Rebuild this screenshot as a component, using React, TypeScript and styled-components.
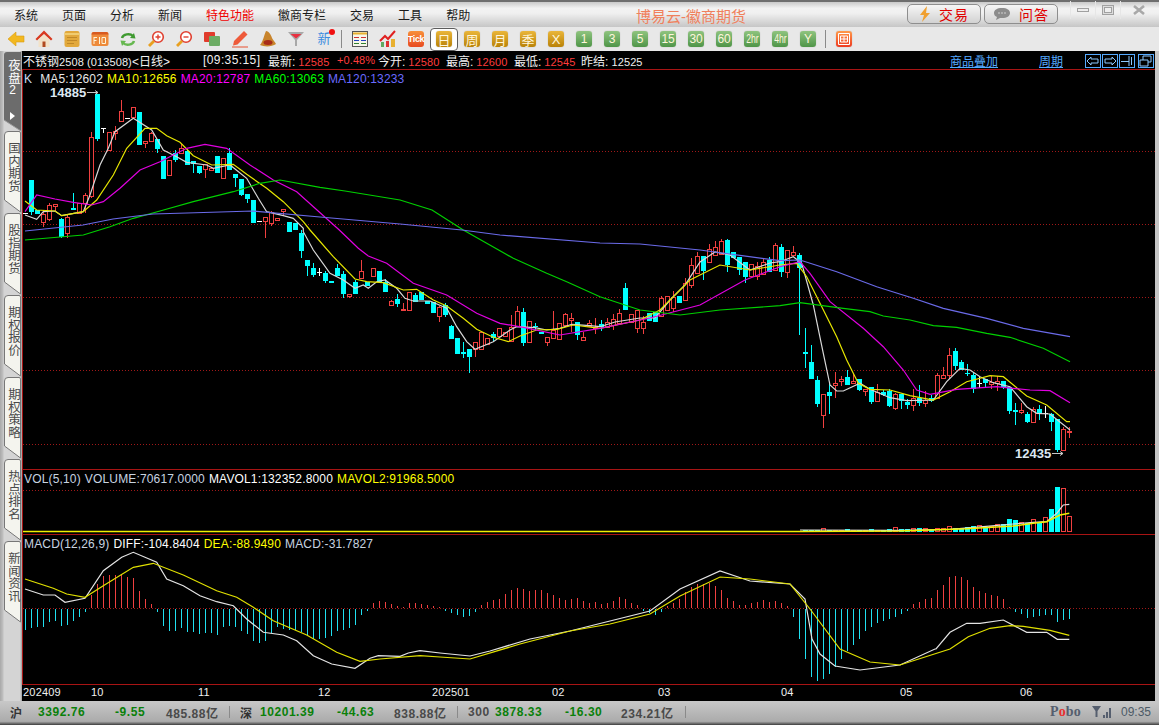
import React from "react";
import styled, { createGlobalStyle } from "styled-components";

// Chart data, read off the picture: y is [y / scale + offset] in page pixels

type Kind = "c" | "r" | "w";
type Row = [Kind, number, number, number, number];
type Candle = { k: Kind; t: number; b: number; wt: number; wb: number };

const c = (t: number, b: number, wt = t, wb = b): Row => ["c", t, b, wt, wb];
const r = (t: number, b: number, wt = t, wb = b): Row => ["r", t, b, wt, wb];
const w = (t: number, b: number, wt = t, wb = b): Row => ["w", t, b, wt, wb];

const seg = (oy: number, s: number, rows: Row[]): Candle[] =>
  rows.map(([k, t, b, wt, wb]) => ({
    k,
    t: oy + t / s,
    b: oy + b / s,
    wt: oy + wt / s,
    wb: oy + wb / s,
  }));

const candles: Candle[] = [
  ...seg(85, 3, [
    c(285, 380, 285, 390), c(375, 388), r(388, 412, 375, 425), r(360, 402, 355, 407), r(358, 365, 358, 380),
    c(402, 455, 400, 460), r(395, 443, 390, 460), c(370, 375, 323, 375), r(355, 385), r(330, 355, 325, 385),
    r(157, 335, 140, 340), c(27, 162, 27, 167), w(130, 132, 130, 145), r(142, 195, 142, 198), r(137, 143, 122, 165),
    r(78, 107, 45, 107), w(100, 102), r(67, 98), c(82, 182), r(167, 172, 167, 190),
    r(145, 170, 140, 170), c(162, 192, 162, 203), c(213, 281), r(226, 271), c(205, 225, 195, 232),
    r(190, 205, 178, 205), c(197, 240, 195, 240), c(227, 236, 227, 262), c(243, 263, 243, 268), r(238, 252, 238, 278),
    r(250, 256), c(213, 263), r(220, 281), c(204, 254, 190, 254), c(267, 278, 267, 305),
    c(283, 330, 283, 335), c(327, 342, 327, 355), c(345, 415), w(408, 410), r(397, 410, 397, 458),
    r(380, 412, 378, 422), r(398, 403), r(373, 378, 373, 392), c(411, 440), c(413, 435),
  ]),
  ...seg(230, 3, [
    c(10, 65, 0, 83), c(90, 108, 90, 137), c(113, 135, 98, 140), w(127, 129, 115, 138), c(128, 153, 122, 157),
    c(153, 158), c(113, 138, 102, 138), c(132, 192, 122, 203), r(193, 200, 193, 203), c(155, 192, 150, 192),
    r(124, 146, 90, 146), c(156, 167), r(114, 137), c(123, 155), c(155, 186, 148, 186),
    r(214, 227, 210, 227), c(207, 221, 193, 233), r(238, 242, 220, 242), r(187, 242), c(195, 215, 190, 215),
    c(187, 210), c(213, 222), c(215, 248), r(232, 258, 228, 275), c(224, 255, 220, 263),
    c(287, 327, 285, 327), c(323, 372), c(366, 372, 335, 383), c(357, 381, 357, 428), r(337, 358, 337, 380),
    r(305, 355), r(325, 342), c(312, 325, 305, 333), r(295, 320), r(305, 318),
    r(292, 335, 255, 335), r(243, 288, 228, 288), c(246, 340, 235, 350), r(274, 338), c(289, 291, 278, 300),
    c(305, 311), r(322, 338, 322, 347), r(300, 323, 243, 323), r(280, 329), r(253, 285, 250, 285),
    r(265, 270, 250, 305), c(277, 315, 277, 332), r(322, 331, 305, 331), r(280, 290, 270, 290), r(292, 295, 265, 312),
  ]),
  ...seg(0, 1, [
    c(324, 327, 320, 331), r(322, 327, 318, 327), r(319, 325, 314, 330), r(313, 323, 309, 323), c(288, 310, 283, 310),
    r(314, 322), r(310, 328, 310, 333), r(322, 328, 316, 334), c(313, 321), c(312, 322),
    r(298, 316, 296, 316), r(296, 310), r(297, 308, 291, 312), c(296, 303), r(283, 300, 278, 300),
    r(265, 285, 258, 288), r(256, 273, 252, 273), c(256, 271, 256, 280), r(249, 262, 244, 262), r(247, 255, 241, 255),
    r(241, 254, 239, 254), c(240, 265, 239, 272), c(252, 258), c(257, 270, 257, 275), c(262, 277, 262, 283),
    r(264, 276), r(266, 276, 262, 280), r(262, 274, 258, 274), c(260, 272, 257, 272), r(245, 270, 243, 270),
  ]),
  ...seg(230, 3, [
    c(50, 125, 42, 140), r(60, 125, 60, 143), r(66, 76, 48, 76), c(75, 113, 70, 315), c(366, 372, 293, 413),
    c(395, 447, 345, 447), c(450, 522, 438, 530), r(492, 554, 492, 593), c(486, 498, 460, 552), r(460, 467, 425, 503),
    r(448, 455, 437, 467), c(441, 465, 420, 465), r(453, 460, 428, 460), c(448, 480, 448, 483), r(477, 483, 477, 498),
    c(470, 516, 470, 520), r(485, 513, 463, 513), c(487, 497, 480, 497), c(482, 528, 478, 533), r(492, 533, 488, 540),
    c(492, 512, 492, 537), c(515, 525, 508, 537), r(505, 525, 478, 543), c(505, 520, 465, 528), r(510, 520, 483, 530),
    c(505, 515, 495, 515), r(435, 503, 428, 503), r(435, 443, 412, 447), r(375, 435, 355, 447), c(363, 408, 355, 420),
    c(396, 420, 390, 420), c(429, 431, 403, 440), c(435, 478, 425, 488), w(459, 461, 440, 473), c(447, 460, 447, 473),
    r(455, 461, 437, 478), r(453, 460, 437, 483), c(453, 470, 453, 478), c(470, 543, 470, 550), c(540, 545, 518, 585),
    r(541, 546, 520, 552), c(552, 577, 545, 577), r(538, 576, 530, 576), c(537, 553, 525, 570), w(549, 551, 528, 563),
    c(552, 575, 548, 603), c(567, 660, 567, 665), r(598, 662, 590, 662), r(603, 607, 590, 623),
  ]),
];

const candleX = (i: number) => 31 + i * 6;

const pts = (ox: number, oy: number, s: number, a: number[]) => {
  const out: string[] = [];
  for (let i = 0; i < a.length; i += 2) out.push(`${(ox + a[i] / s).toFixed(1)},${(oy + a[i + 1] / s).toFixed(1)}`);
  return out.join(" ");
};

const maLines = [
  {
    color: "#d8d8d8",
    points: [
      pts(20, 85, 3, [15, 390, 50, 403, 70, 380, 105, 378, 125, 392, 190, 380, 210, 330, 240, 240, 265, 190, 285, 140, 340, 100, 395, 135, 430, 195, 470, 215, 500, 232, 560, 240, 580, 250, 630, 240, 680, 280, 715, 340, 740, 380, 790, 392, 820, 400, 850, 430]),
      pts(300, 230, 3, [10, 5, 40, 60, 90, 130, 130, 150, 165, 175, 190, 165, 205, 175, 230, 155, 255, 150, 290, 175, 315, 205, 340, 213, 390, 213, 440, 235, 470, 290, 500, 335, 525, 358, 580, 335, 630, 300, 650, 290, 705, 293, 740, 300, 780, 295, 815, 283, 870, 287, 900, 290]),
      pts(0, 0, 1, [615, 322, 640, 318, 655, 318, 670, 300, 685, 285, 700, 262, 715, 252, 730, 255, 750, 270, 770, 263]),
      pts(780, 230, 3, [0, 95, 40, 80, 65, 100, 100, 225, 130, 370, 150, 465, 170, 483, 190, 483, 240, 460, 270, 478, 330, 503, 380, 512, 460, 510, 500, 455, 540, 415, 570, 420, 600, 440, 640, 458, 690, 470, 740, 530, 770, 550, 810, 552, 870, 600]),
    ],
  },
  {
    color: "#e6e600",
    points: [
      pts(20, 85, 3, [15, 348, 50, 375, 105, 378, 125, 392, 190, 380, 230, 345, 280, 270, 320, 190, 375, 130, 410, 130, 440, 152, 480, 172, 520, 212, 575, 240, 640, 238, 680, 268, 740, 310, 790, 350, 850, 410]),
      pts(300, 230, 3, [30, 0, 100, 80, 165, 147, 200, 155, 250, 158, 310, 180, 350, 178, 400, 210, 440, 228, 490, 265, 530, 298, 580, 322, 625, 335, 660, 318, 710, 300, 770, 298, 820, 285, 900, 295]),
      pts(0, 0, 1, [640, 320, 660, 310, 690, 280, 720, 265, 750, 270]),
      pts(780, 230, 3, [0, 105, 50, 100, 80, 140, 120, 220, 170, 320, 200, 390, 235, 460, 270, 478, 330, 480, 390, 497, 460, 510, 510, 485, 560, 455, 630, 437, 670, 440, 740, 498, 800, 525, 860, 575, 870, 575]),
    ],
  },
  {
    color: "#e000e0",
    points: [
      pts(20, 85, 3, [15, 380, 50, 330, 105, 342, 160, 352, 215, 360, 250, 350, 300, 310, 360, 255, 420, 230, 500, 190, 555, 178, 620, 190, 690, 240, 760, 285, 830, 320]),
      pts(300, 230, 3, [118, 0, 175, 55, 205, 78, 260, 100, 340, 160, 440, 195, 530, 250, 600, 280, 670, 292, 780, 315, 900, 295]),
      pts(0, 0, 1, [650, 318, 700, 305, 745, 280]),
      pts(780, 230, 3, [0, 110, 60, 95, 90, 130, 150, 215, 250, 295, 310, 350, 370, 420, 410, 480, 450, 493, 530, 478, 650, 470, 750, 480, 810, 482, 870, 518]),
    ],
  },
  {
    color: "#00d000",
    points: [
      pts(20, 85, 3, [15, 465, 190, 450, 270, 425, 340, 400, 420, 378, 520, 350, 640, 320, 720, 295, 780, 285, 900, 307]),
      pts(0, 0, 1, [345, 191, 400, 200, 432, 210]),
      pts(300, 230, 3, [490, 0, 560, 40, 640, 85, 740, 130, 800, 155, 900, 200]),
      pts(0, 0, 1, [640, 310, 680, 315, 720, 310]),
      pts(780, 230, 3, [0, 227, 60, 218, 190, 235, 270, 245, 310, 258, 390, 270, 460, 287, 530, 292, 620, 310, 690, 322, 790, 355, 870, 395]),
    ],
  },
  {
    color: "#6a6ae8",
    points: [
      pts(0, 0, 1, [25, 231, 83, 225, 113, 219, 153, 214, 187, 213, 220, 212, 253, 211, 320, 217, 400, 224, 462, 230, 500, 235, 600, 243, 640, 244, 700, 250]),
      pts(780, 230, 3, [0, 92, 60, 90, 170, 125, 290, 170, 400, 205, 490, 235, 620, 265, 730, 295, 870, 320]),
    ],
  },
];

const volTail = [3, 5, 4, 4, 5, 6, 6, 5, 5, 7, 8, 13, 12, 9, 9, 12, 10, 14, 23, 45, 43, 15];
const volHeight = (i: number) => {
  if (i >= 152) return volTail[i - 152];
  if (i > 128) return 2 + (i % 4 === 0 ? 1 : 0) + (i > 142 ? 1 : 0);
  return 1;
};

const volWhite = [
  pts(0, 0, 1, [800, 530]),
  pts(900, 470, 3, [0, 181, 150, 178, 250, 170, 340, 162, 400, 157, 440, 155, 470, 130, 490, 105, 508, 103]),
];
const volYellow = [
  pts(0, 0, 1, [23, 531.5, 500, 531.5, 800, 531.5]),
  pts(900, 470, 3, [0, 183, 200, 176, 340, 168, 400, 160, 440, 155, 480, 135, 508, 130]),
];

const histHead = [300, 295, 293, 292, 278, 273, 290, 285, 275, 263, 248, 200, 165, 143, 140, 140, 135, 145, 147, 187, 212, 227, 248, 288, 303, 305, 296, 306, 308, 312, 310, 310, 317, 292, 288, 292, 303, 312, 334, 339, 335, 310, 292, 297, 300, 302, 307, 320, 328, 327, 325, 318, 303, 301, 295, 286, 255, 243, 222, 216, 219, 225, 232, 237, 222, 222].map((z) => (238 - z) / 3);
const histMid = [4, 3, 2, 1, -2, -4, -6, -8, -7, -3, 3, 6, 8, 9, 14, 18, 20, 19, 17, 18, 18, 15, 13, 10, 8, 9, 10, 7, 5, 6, 4, 5, 7, 11, 9, 5, 3, -2, -4, -6, -3, 2, 5, 9, 16, 21, 24, 24, 25, 22, 18, 10, 7, 3, 3, 5, 6, 8, 6, 7, 5, 2, -8, -30, -50, -68, -72, -70, -65, -58, -50, -42, -36, -30, -22, -18, -14, -12, -10, -8, -5, -2];
const histTail = [405, 399, 390, 387, 363, 348, 324, 321, 324, 333, 354, 366, 372, 378, 381, 390, 414, 426, 432, 444, 441, 438, 435, 435, 456, 450, 447].map((z) => (418 - z) / 3);
const hist = [...histHead, ...histMid, ...histTail];

const diffLine = [
  pts(20, 530, 3, [15, 180, 70, 198, 105, 198, 135, 220, 195, 208, 250, 125, 305, 85, 340, 70, 410, 100, 440, 150, 490, 170, 540, 200, 590, 218, 640, 230, 680, 270, 730, 310, 790, 318, 830, 335, 880, 380, 935, 405, 1005, 418, 1050, 388, 1075, 380, 1140, 382, 1165, 372, 1200, 365]),
  pts(0, 0, 1, [440, 654, 470, 657, 490, 652, 530, 640, 570, 632, 610, 622, 650, 612, 680, 590, 720, 572, 750, 582, 790, 585, 805, 600, 812, 640, 820, 655, 835, 667, 860, 671, 900, 666, 935, 650]),
  pts(900, 470, 3, [108, 540, 150, 490, 200, 463, 240, 463, 310, 453, 380, 490, 440, 490, 472, 511, 508, 511]),
];
const deaLine = [
  pts(20, 530, 3, [15, 150, 100, 178, 140, 195, 195, 205, 250, 170, 340, 115, 400, 103, 490, 138, 590, 185, 650, 205, 700, 235, 760, 275, 860, 318, 950, 370, 1020, 397, 1080, 390, 1200, 380]),
  pts(0, 0, 1, [440, 658, 470, 660, 520, 645, 570, 632, 610, 625, 650, 615, 680, 597, 720, 578, 750, 580, 790, 585, 810, 610, 840, 650, 870, 663, 900, 666, 950, 650]),
  pts(900, 470, 3, [150, 540, 205, 503, 270, 478, 330, 470, 370, 472, 450, 484, 508, 499]),
];

const axisMarks = [
  { label: "202409", x: 23 },
  { label: "10", x: 91 },
  { label: "11", x: 198 },
  { label: "12", x: 318 },
  { label: "202501", x: 432 },
  { label: "02", x: 552 },
  { label: "03", x: 658 },
  { label: "04", x: 781 },
  { label: "05", x: 900 },
  { label: "06", x: 1020 },
];

const menuItems = ["系统", "页面", "分析", "新闻", "特色功能", "徽商专栏", "交易", "工具", "帮助"];
const sideTabs = ["国内期货", "股指期货", "期权报价", "期权策略", "热点排名", "新闻资讯"];
const goldCycles = ["周", "月", "季", "X"];
const greenCycles = ["1", "3", "5", "15", "30", "60", "2hr", "4hr", "Y"];

// Styled Components

const Global = createGlobalStyle`
  html, body { margin: 0; padding: 0; background: #c8c8c8; }
  * { box-sizing: border-box; }
`;

const Shell = styled.div`
  width: 1159px;
  height: 725px;
  overflow: hidden;
  display: flex;
  flex-direction: column;
  font-family: "Liberation Sans", "Noto Sans CJK SC", sans-serif;
  font-size: 12px;
  background: #c4c4c4;
`;

const MenuBar = styled.div`
  height: 27px;
  flex: none;
  display: flex;
  align-items: center;
  padding-left: 14px;
  border-top: 2px solid #6e6e6e;
  background: linear-gradient(#c9c9c9 0%, #f2f2f2 25%, #f0f0f0 45%, #c6c6c6 100%);
  position: relative;
`;

const MenuItem = styled.span<{ $hot?: boolean }>`
  margin-right: 24px;
  color: ${(p) => (p.$hot ? "#f00000" : "#1a1a1a")};
  font-size: 12px;
  white-space: nowrap;
`;

const BrandTitle = styled.span`
  position: absolute;
  left: 636px;
  top: 3px;
  color: #f0805c;
  font-size: 15px;
`;

const MenuActions = styled.div`
  position: absolute;
  left: 907px;
  top: 2px;
  display: flex;
  gap: 3px;
`;

const ActionButton = styled.div`
  width: 74px;
  height: 20px;
  display: flex;
  align-items: center;
  justify-content: center;
  gap: 8px;
  border: 1px solid #8e8e8e;
  border-radius: 5px;
  background: linear-gradient(#f6f6f6, #d2d2d2);
  color: #e00000;
  font-size: 14px;
  letter-spacing: 1px;
`;

const WindowButtons = styled.div`
  position: absolute;
  left: 1070px;
  top: -1px;
  display: flex;
`;

const WindowButton = styled.div<{ $w: number }>`
  width: ${(p) => p.$w}px;
  height: 18px;
  display: flex;
  align-items: center;
  justify-content: center;
  border-left: 1px solid #e6e6e6;
`;

const ToolBar = styled.div`
  height: 24px;
  flex: none;
  display: flex;
  align-items: center;
  padding-left: 2px;
  background: #e8e8e8;
`;

const ToolSlot = styled.div`
  width: 28px;
  height: 24px;
  flex: none;
  display: flex;
  align-items: center;
  justify-content: center;
`;

const ToolDivider = styled.div`
  width: 8px;
  height: 18px;
  flex: none;
  margin-bottom: 1px;
  background: linear-gradient(#8a8a8a, #8a8a8a) 3px 0 / 1px 100% no-repeat;
`;

const ActiveSlot = styled(ToolSlot)`
  height: 23px;
  border: 1px solid #5c5c5c;
  border-radius: 4px;
  background: #ffffff;
`;

const CycleKey = styled.div<{ $tone: "gold" | "green" | "red" }>`
  width: 16px;
  height: 16px;
  display: flex;
  align-items: center;
  justify-content: center;
  border-radius: 3px;
  color: #fff6dc;
  font-family: "Liberation Sans", "Noto Sans CJK SC", sans-serif;
  font-size: ${(p) => (p.$tone === "gold" ? 13 : 12)}px;
  white-space: nowrap;
  letter-spacing: -0.2px;
  background: ${(p) =>
    p.$tone === "gold"
      ? "linear-gradient(#eab63a, #b98208)"
      : p.$tone === "green"
      ? "linear-gradient(#8fc47f, #4f9548)"
      : "linear-gradient(#ff9a4a, #ee3a20)"};
  box-shadow: 0 0 1px #9a9a9a;
`;

const TightLabel = styled.span`
  display: inline-block;
  transform: scaleX(0.72);
`;

const NewMark = styled.span`
  position: relative;
  color: #3c8ce0;
  font-size: 13px;
  line-height: 14px;
  &::after {
    content: "";
    position: absolute;
    right: -4px;
    top: -3px;
    width: 6px;
    height: 6px;
    border-radius: 50%;
    background: #f01010;
  }
`;

const TickKey = styled.div`
  width: 16px;
  height: 16px;
  display: flex;
  align-items: center;
  justify-content: center;
  border-radius: 3px;
  background: linear-gradient(#f8903a, #e84a20);
  color: #fff;
  font-size: 9px;
  font-weight: bold;
  letter-spacing: -0.3px;
`;

const Body = styled.div`
  flex: 1;
  min-height: 0;
  display: flex;
`;

const Rail = styled.div`
  width: 22px;
  flex: none;
  padding-left: 4px;
  background: linear-gradient(90deg, #a8a8a8 0, #c0c0c0 3px, #d4d4d4 4px, #d4d4d4 20px, #9c9c9c 22px);
  display: flex;
  flex-direction: column;
`;

const RailTab = styled.div<{ $active?: boolean }>`
  position: relative;
  width: 17px;
  height: ${(p) => (p.$active ? 80 : 82)}px;
  flex: none;
  display: flex;
  flex-direction: column;
  align-items: center;
  padding-top: ${(p) => (p.$active ? 8 : 11)}px;
  color: ${(p) => (p.$active ? "#ffffff" : "#4a4a4a")};
`;

const TabShape = styled.svg`
  position: absolute;
  left: 0;
  top: 0;
`;

const TabLabel = styled.span`
  position: relative;
  writing-mode: vertical-rl;
  font-size: 12.5px;
  line-height: 15px;
`;

const TabIndex = styled.span`
  position: relative;
  font-size: 12px;
  line-height: 13px;
`;

const TabArrow = styled.span`
  position: relative;
  margin-top: 15px;
  width: 0;
  height: 0;
  border-left: 5px solid #fff;
  border-top: 4px solid transparent;
  border-bottom: 4px solid transparent;
`;

const ChartColumn = styled.div`
  flex: 1;
  min-width: 0;
  display: flex;
  flex-direction: column;
  margin-right: 4px;
  background: #000;
  color: #fff;
`;

const InfoBar = styled.div`
  height: 19px;
  flex: none;
  position: relative;
  display: flex;
  align-items: center;
  padding-left: 1px;
  border-bottom: 1px solid #a81414;
  white-space: nowrap;
`;

const InfoField = styled.span<{ $w: number }>`
  width: ${(p) => p.$w}px;
  flex: none;
  color: #f0f0f0;
`;

const Num = styled.span`
  font-size: 11px;
  letter-spacing: 0.1px;
`;

const Clock = styled(Num)`
  font-size: 12px;
  letter-spacing: 0.4px;
`;

const Up = styled(Num)`
  color: #ff3c3c;
  margin-left: 3px;
`;

const InfoLinks = styled.div`
  position: absolute;
  left: 928px;
  top: 1px;
  display: flex;
  align-items: center;
  height: 17px;
`;

const InfoLink = styled.a<{ $w: number }>`
  width: ${(p) => p.$w}px;
  color: #55aaff;
  text-decoration: underline;
`;

const NavKey = styled.div`
  width: 16px;
  height: 14px;
  margin-left: 1px;
  border: 1px solid #55aaff;
  display: flex;
  align-items: center;
  justify-content: center;
  &:last-child {
    margin-left: 3px;
  }
`;

const Pane = styled.div<{ $h: number }>`
  position: relative;
  height: ${(p) => p.$h}px;
  flex: none;
  border-left: 1px solid #a81414;
  border-bottom: 1px solid #a81414;
`;

const PaneSvg = styled.svg`
  display: block;
`;

const PaneHeader = styled.div`
  position: absolute;
  left: 1px;
  top: 2px;
  display: flex;
  gap: 4px;
  white-space: nowrap;
  line-height: 15px;
  letter-spacing: 0.16px;
`;

const Legend = styled.span<{ $color: string }>`
  color: ${(p) => p.$color};
`;

const LegendFirst = styled(Legend)`
  margin-right: 4px;
`;

const TimeAxis = styled.div`
  position: relative;
  height: 15px;
  flex: none;
`;

const AxisLabel = styled.span`
  position: absolute;
  top: 0;
  color: #f0f0f0;
  font-size: 11px;
  letter-spacing: 0.2px;
  line-height: 14px;
`;

const StatusBar = styled.div`
  height: 24px;
  flex: none;
  position: relative;
  display: flex;
  align-items: center;
  padding: 0 0 2px 10px;
  background: linear-gradient(#c8c8c8, #ababab 85%, #7a7a7a 92%, #3c3c3c 100%);
  font-weight: bold;
  white-space: nowrap;
`;

const StatusCell = styled.span<{ $w: number; $tone?: "green" | "grey" | "dark" }>`
  width: ${(p) => p.$w}px;
  flex: none;
  letter-spacing: 0.55px;
  color: ${(p) => (p.$tone === "green" ? "#0a800a" : p.$tone === "dark" ? "#333" : "#4a4a4a")};
`;

const StatusDivider = styled.span`
  width: 1px;
  height: 12px;
  flex: none;
  margin-right: 10px;
  background: #8a8a8a;
`;

const StatusRight = styled.div`
  position: absolute;
  left: 1050px;
  top: 0;
  height: 22px;
  display: flex;
  align-items: center;
`;

const PoboMark = styled.span`
  width: 42px;
  font-family: "Liberation Serif", serif;
  font-size: 14px;
  font-weight: bold;
  color: #555e6e;
  letter-spacing: 0.1px;
  & > b {
    color: #e83030;
  }
`;

const ClockText = styled.span`
  margin-left: 9px;
  font-weight: normal;
  color: #4c5a66;
`;

// Toolbar drawings

const Ic = ({ children }: { children: React.ReactNode }) => (
  <svg width="18" height="18" viewBox="0 0 18 18">
    {children}
  </svg>
);

const toolIcons: React.ReactNode[] = [
  <Ic key="back">
    <path d="M1 9l8-7v4h8v6H9v4z" fill="#f2b820" stroke="#d89a10" strokeWidth="0.6" />
  </Ic>,
  <Ic key="home">
    <path d="M9 0.500L0.500 9l1.500 1.500L9 4l7 6.500L17.500 9z" fill="#d83a20" />
    <path d="M3.500 9.500L9 4.500l5.500 5V17h-11z" fill="#f2e2c8" />
    <path d="M7.500 11.500h3V17h-3z" fill="#b04a20" />
  </Ic>,
  <Ic key="note">
    <rect x="1.500" y="1" width="15" height="16" rx="2" fill="#e2a93c" />
    <path d="M1.500 4h15" stroke="#f0cc70" strokeWidth="2" />
    <path d="M4 7.500h10M4 10.500h10M4 13.500h7" stroke="#c08828" />
  </Ic>,
  <Ic key="f10">
    <rect x="0.500" y="2" width="17" height="14" rx="2" fill="#ee8a3a" />
    <path d="M0.500 4.500q0-2.500 2-2.500h13q2 0 2 2.500z" fill="#d85a20" />
    <path d="M3 7v7M3 7.500h3M3 10.500h2.500M8.500 7v7M11 7.500h3.500v6H11z" stroke="#fff4d8" fill="none" />
  </Ic>,
  <Ic key="swap">
    <path d="M3 8c1-4 8-5 11-2" fill="none" stroke="#3f9a30" strokeWidth="2.400" />
    <path d="M16.500 8.500L11 8l4-5z" fill="#3f9a30" />
    <path d="M15 11c-1 4-8 5-11 2" fill="none" stroke="#66b850" strokeWidth="2.400" />
    <path d="M1.500 10.500L7 11l-4 5z" fill="#66b850" />
  </Ic>,
  <Ic key="in">
    <circle cx="11" cy="7" r="5.300" fill="#fff" stroke="#e04030" strokeWidth="1.600" />
    <path d="M8.500 7h5M11 4.500v5" stroke="#e04030" strokeWidth="1.400" />
    <path d="M7 11l-5 5" stroke="#e8a020" strokeWidth="2.800" />
  </Ic>,
  <Ic key="out">
    <circle cx="11" cy="7" r="5.300" fill="#fff" stroke="#e04030" strokeWidth="1.600" />
    <path d="M8.500 7h5" stroke="#e04030" strokeWidth="1.400" />
    <path d="M7 11l-5 5" stroke="#e8a020" strokeWidth="2.800" />
  </Ic>,
  <Ic key="layers">
    <rect x="1" y="2" width="11" height="10" rx="1" fill="#e03c2c" />
    <rect x="6" y="6" width="11" height="10" rx="1" fill="#6cac64" />
  </Ic>,
  <Ic key="pen">
    <path d="M3 11L13 1l3.500 3.500L6.500 14.500l-4.500 1z" fill="#ee5a3a" />
    <path d="M1 17h16" stroke="#e85030" />
  </Ic>,
  <Ic key="bell">
    <path d="M7 1c3 0 5 4 6 7 1 2 3 4 4 6-4 3-12 3-16 1 3-3 4-10 6-14z" fill="#c8842c" />
    <ellipse cx="9" cy="12.500" rx="4.500" ry="2.500" fill="#a82c18" />
  </Ic>,
  <Ic key="filter">
    <path d="M1 2h16L10 10v6H8v-6z" fill="#a8a8a8" />
    <path d="M3.500 4h11L9 8.500z" fill="#e83040" />
  </Ic>,
  <NewMark key="new">新</NewMark>,
];

const dataIcons: React.ReactNode[] = [
  <Ic key="table">
    <rect x="1.500" y="1.500" width="15" height="15" fill="#f6f6ea" stroke="#555" />
    <path d="M2 3.500h14" stroke="#e8b030" strokeWidth="2" />
    <path d="M3 7.500h5M10 7.500h5" stroke="#d03030" />
    <path d="M3 10.500h5M10 10.500h5" stroke="#2040c0" />
    <path d="M3 13.500h5M10 13.500h5" stroke="#308030" />
  </Ic>,
  <Ic key="trend">
    <path d="M1 11l5-5 3 3 7-8" fill="none" stroke="#e02020" strokeWidth="2" />
    <path d="M2 12h3v5H2z" fill="#60a860" />
    <path d="M7 11h3v6H7z" fill="#e03030" />
    <path d="M12 9h4v8h-4z" fill="#e8b030" />
  </Ic>,
  <TickKey key="tick">Tick</TickKey>,
];

const FrameIcon = () => (
  <svg width="12" height="12" viewBox="0 0 12 12">
    <path d="M.5.500h11v11h-11zM2.500 3h7v6h-7zM2.500 6h7M6 3v6" fill="none" stroke="#fff" />
  </svg>
);

const navPaths = [
  "M1 6l4-4v2h7v4H5v2z",
  "M13 6L9 2v2H2v4h7v2z",
  "M1 6.500h8M9 1v10M11.500 2v8",
  "M1 5h8v6H1zM4 5V1h8v6H9",
];

const tabPath = (h: number) =>
  `M.5 ${h - 13} V4 Q.5 .5 4 .5 H15 Q16.500 .5 16.500 2 V${h - 1} Z`;

const MainTab = () => (
  <TabShape width="17" height="80" viewBox="0 0 17 80">
    <path d="M0 4Q0 1 3 1H17V80L0 69Z" fill="#6c6c6c" />
    <path d="M0 69L17 80" stroke="#9a9a9a" />
  </TabShape>
);

// Functional Components

const CandleGlyph = ({ d, i }: { d: Candle; i: number }) => {
  const x = candleX(i);
  if (d.k === "r") {
    return (
      <g stroke="#f04040" fill="#000">
        {d.wt < d.t && <path d={`M${x + 0.5} ${Math.round(d.wt)}V${Math.round(d.t)}`} />}
        {d.wb > d.b && <path d={`M${x + 0.5} ${Math.round(d.b)}V${Math.round(d.wb)}`} />}
        <rect x={x - 1.5} y={Math.round(d.t) + 0.5} width={4} height={Math.max(1, Math.round(d.b - d.t))} />
      </g>
    );
  }
  const color = d.k === "w" ? "#ffffff" : "#00ffff";
  return (
    <g fill={color}>
      <rect x={x} y={Math.round(d.wt)} width={1} height={Math.max(1, Math.round(d.wb - d.wt))} />
      <rect x={x - 2} y={Math.round(d.t)} width={5} height={Math.max(1, Math.round(d.b - d.t))} />
    </g>
  );
};

const GridLine = ({ y }: { y: number }) => (
  <line x1={23} x2={1155} y1={y + 0.5} y2={y + 0.5} stroke="#a01818" strokeDasharray="1 2" shapeRendering="crispEdges" />
);

const Line = ({ points, color, weight = 1.2 }: { points: string; color: string; weight?: number }) => (
  <polyline points={points} fill="none" stroke={color} strokeWidth={weight} />
);

const PriceTag = ({ x, y, text }: { x: number; y: number; text: string }) => (
  <g>
    <text x={x} y={y} fill="#dce8f2" fontSize="13" fontWeight="bold" fontFamily="Liberation Sans, sans-serif">
      {text}
    </text>
    <path d={`M${x + 37} ${y - 4.5}h11m-3 -2l3 2l-3 2`} fill="none" stroke="#c8c8c8" />
  </g>
);

const MainPane = () => (
  <Pane $h={400}>
    <PaneSvg width={1132} height={399} viewBox="23 70 1132 399">
      {[151, 224, 297, 370, 444].map((y) => (
        <GridLine key={y} y={y} />
      ))}
      <g shapeRendering="crispEdges">
        <path d="M23 213.500h5" stroke="#fff" />
        {candles.map((d, i) => (
          <CandleGlyph key={i} d={d} i={i} />
        ))}
      </g>
      {maLines.map((m) => (
        <Line key={m.color} color={m.color} points={m.points.join(" ")} />
      ))}
      <PriceTag x={50} y={97} text="14885" />
      <PriceTag x={1015} y={458} text="12435" />
    </PaneSvg>
    <PaneHeader>
      <LegendFirst $color="#c8dcf0">K</LegendFirst>
      <Legend $color="#e8e8e8">MA5:12602</Legend>
      <Legend $color="#ffff00">MA10:12656</Legend>
      <Legend $color="#ff00ff">MA20:12787</Legend>
      <Legend $color="#00ff00">MA60:13063</Legend>
      <Legend $color="#6a6aff">MA120:13233</Legend>
    </PaneHeader>
  </Pane>
);

const VolumePane = () => (
  <Pane $h={65}>
    <PaneSvg width={1132} height={64} viewBox="23 470 1132 64">
      <GridLine y={490} />
      <g shapeRendering="crispEdges">
        {candles.map((d, i) => {
          const h = volHeight(i);
          const x = candleX(i);
          const up = d.k !== "c";
          if (up && h > 2) {
            return <rect key={i} x={x - 1.5} y={531.5 - h} width={4} height={h} fill="#000" stroke="#f04040" />;
          }
          return <rect key={i} x={x - 2} y={532 - h} width={5} height={h} fill={up ? "#f04040" : "#00ffff"} />;
        })}
      </g>
      <Line color="#e0e0e0" points={volWhite.join(" ")} />
      <Line color="#f0f000" points={volYellow.join(" ")} weight={1.5} />
    </PaneSvg>
    <PaneHeader>
      <Legend $color="#c8d4e0">VOL(5,10)</Legend>
      <Legend $color="#c8d4e0">VOLUME:70617.0000</Legend>
      <Legend $color="#ffffff">MAVOL1:132352.8000</Legend>
      <Legend $color="#ffff00">MAVOL2:91968.5000</Legend>
    </PaneHeader>
  </Pane>
);

const MacdPane = () => (
  <Pane $h={150}>
    <PaneSvg width={1132} height={149} viewBox="23 536 1132 149">
      <GridLine y={609} />
      <g shapeRendering="crispEdges">
        {hist.map((v, idx) => {
          const h = Math.max(1, Math.round(Math.abs(v)));
          const x = candleX(idx - 1);
          return (
            <rect
              key={idx}
              x={x}
              y={v > 0 ? 609 - h : 610}
              width={1}
              height={h}
              fill={v > 0 ? "#f04040" : "#20e0f0"}
            />
          );
        })}
      </g>
      <Line color="#e4e4e4" points={diffLine.join(" ")} />
      <Line color="#e0e000" points={deaLine.join(" ")} />
    </PaneSvg>
    <PaneHeader>
      <Legend $color="#c8d4e0">MACD(12,26,9)</Legend>
      <Legend $color="#ffffff">DIFF:-104.8404</Legend>
      <Legend $color="#ffff00">DEA:-88.9490</Legend>
      <Legend $color="#c8d4e0">MACD:-31.7827</Legend>
    </PaneHeader>
  </Pane>
);

const App = () => {
  return (
    <Shell>
      <Global />
      <MenuBar>
        {menuItems.map((m) => (
          <MenuItem key={m} $hot={m === "特色功能"}>
            {m}
          </MenuItem>
        ))}
        <BrandTitle>博易云-徽商期货</BrandTitle>
        <MenuActions>
          <ActionButton>
            <svg width="12" height="16" viewBox="0 0 12 16">
              <path d="M8 0L1 9h4l-2 7 8-9H7z" fill="#f0a030" />
            </svg>
            交易
          </ActionButton>
          <ActionButton>
            <svg width="18" height="14" viewBox="0 0 18 14">
              <path d="M9 1c5 0 8 2 8 5s-3 5-8 5H7l-4 2 1-3C2 9 1 8 1 6c0-3 3-5 8-5z" fill="#8c8c8c" />
              <path d="M5.500 6h1M8.500 6h1M11.500 6h1" stroke="#e8e8e8" strokeWidth="1.400" />
            </svg>
            问答
          </ActionButton>
        </MenuActions>
        <WindowButtons>
          <WindowButton $w={25}>
            <svg width="12" height="4" viewBox="0 0 12 4">
              <rect x=".5" y=".5" width="11" height="3" fill="#eee" stroke="#a0a0a0" />
            </svg>
          </WindowButton>
          <WindowButton $w={25}>
            <svg width="12" height="10" viewBox="0 0 12 10">
              <rect x=".5" y=".5" width="11" height="9" fill="#ddd" stroke="#a0a0a0" />
              <rect x="2.500" y="2.500" width="7" height="5" fill="#eee" stroke="#a0a0a0" />
            </svg>
          </WindowButton>
          <WindowButton $w={36}>
            <svg width="12" height="10" viewBox="0 0 12 10">
              <path d="M1 1l10 8M11 1L1 9" stroke="#a8a8a8" strokeWidth="2.600" />
            </svg>
          </WindowButton>
        </WindowButtons>
      </MenuBar>
      <ToolBar>
        {toolIcons.map((icon, i) => (
          <ToolSlot key={i}>{icon}</ToolSlot>
        ))}
        <ToolDivider />
        {dataIcons.map((icon, i) => (
          <ToolSlot key={i}>{icon}</ToolSlot>
        ))}
        <ActiveSlot>
          <CycleKey $tone="gold">日</CycleKey>
        </ActiveSlot>
        {goldCycles.map((g) => (
          <ToolSlot key={g}>
            <CycleKey $tone="gold">{g}</CycleKey>
          </ToolSlot>
        ))}
        {greenCycles.map((g) => (
          <ToolSlot key={g}>
            <CycleKey $tone="green">{g.length === 3 ? <TightLabel>{g}</TightLabel> : g}</CycleKey>
          </ToolSlot>
        ))}
        <ToolDivider />
        <ToolSlot>
          <CycleKey $tone="red">
            <FrameIcon />
          </CycleKey>
        </ToolSlot>
      </ToolBar>
      <Body>
        <Rail>
          <RailTab $active>
            <MainTab />
            <TabLabel>夜盘</TabLabel>
            <TabIndex>2</TabIndex>
            <TabArrow />
          </RailTab>
          {sideTabs.map((t) => (
            <RailTab key={t}>
              <TabShape width="17" height="82" viewBox="0 0 17 82">
                <path d={tabPath(82)} fill="#f4f4ee" stroke="#777" />
              </TabShape>
              <TabLabel>{t}</TabLabel>
            </RailTab>
          ))}
        </Rail>
        <ChartColumn>
          <InfoBar>
            <InfoField $w={180}>
              不锈钢<Num>2508 (013508)</Num>&lt;日线&gt;
            </InfoField>
            <InfoField $w={65}>
              <Clock>[09:35:15]</Clock>
            </InfoField>
            <InfoField $w={66}>
              最新:<Up>12585</Up>
            </InfoField>
            <InfoField $w={44}>
              <Up>+0.48%</Up>
            </InfoField>
            <InfoField $w={68}>
              今开:<Up>12580</Up>
            </InfoField>
            <InfoField $w={68}>
              最高:<Up>12600</Up>
            </InfoField>
            <InfoField $w={67}>
              最低:<Up>12545</Up>
            </InfoField>
            <InfoField $w={70}>
              昨结:<Num>&nbsp;12525</Num>
            </InfoField>
            <InfoLinks>
              <InfoLink $w={89}>商品叠加</InfoLink>
              <InfoLink $w={45}>周期</InfoLink>
              {navPaths.map((d) => (
                <NavKey key={d}>
                  <svg width="14" height="12" viewBox="0 0 14 12">
                    <path d={d} fill="none" stroke="#8cc8ff" />
                  </svg>
                </NavKey>
              ))}
            </InfoLinks>
          </InfoBar>
          <MainPane />
          <VolumePane />
          <MacdPane />
          <TimeAxis>
            {axisMarks.map((m) => (
              <AxisLabel key={m.label} style={{ left: m.x - 22 }}>
                {m.label}
              </AxisLabel>
            ))}
          </TimeAxis>
        </ChartColumn>
      </Body>
      <StatusBar>
        <StatusCell $w={28} $tone="dark">沪</StatusCell>
        <StatusCell $w={77} $tone="green">3392.76</StatusCell>
        <StatusCell $w={51} $tone="green">-9.55</StatusCell>
        <StatusCell $w={63}>485.88亿</StatusCell>
        <StatusDivider />
        <StatusCell $w={20} $tone="dark">深</StatusCell>
        <StatusCell $w={77} $tone="green">10201.39</StatusCell>
        <StatusCell $w={57} $tone="green">-44.63</StatusCell>
        <StatusCell $w={63}>838.88亿</StatusCell>
        <StatusDivider />
        <StatusCell $w={27}>300</StatusCell>
        <StatusCell $w={70} $tone="green">3878.33</StatusCell>
        <StatusCell $w={56} $tone="green">-16.30</StatusCell>
        <StatusCell $w={64}>234.21亿</StatusCell>
        <StatusDivider />
        <StatusRight>
          <PoboMark>
            P<b>o</b>bo
          </PoboMark>
          <svg width="20" height="14" viewBox="0 0 20 14">
            <path d="M0 1h9L5.500 6v6H3.500V6z" fill="#555e6e" />
            <path d="M11 10h2v3h-2zM14 7h2v6h-2zM17 3h2v10h-2z" fill="#555e6e" />
          </svg>
          <ClockText>09:35</ClockText>
        </StatusRight>
      </StatusBar>
    </Shell>
  );
};

export default App;
